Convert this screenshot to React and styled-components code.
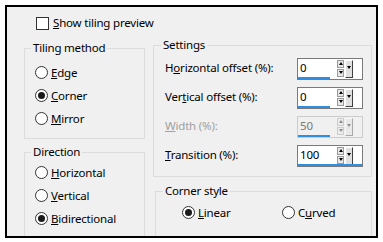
import styled, { createGlobalStyle } from 'styled-components';

const GlobalStyle = createGlobalStyle`
	html, body {
		margin: 0;
		padding: 0;
		background: #ffffff;
	}
	body {
		font-family: "Noto Sans", "Segoe UI", sans-serif;
		font-size: 11.5px;
		letter-spacing: -0.2px;
		color: #000000;
	}
`;

const SETTINGS = [
	{ label: ['H', 'o', 'rizontal offset (%):'], value: '0', fill: 0.5 },
	{ label: ['Ver', 't', 'ical offset (%):'], value: '0', fill: 0.5 },
	{ label: ['', 'W', 'idth (%):'], value: '50', fill: 0.5, disabled: true },
	{ label: ['', 'T', 'ransition (%):'], value: '100', fill: 1 },
];

function Mnemonic({ parts }) {
	return (
		<>
			{parts[0]}
			<u>{parts[1]}</u>
			{parts[2]}
		</>
	);
}

function Radio({ checked, parts }) {
	return (
		<RadioRow>
			<Circle $checked={checked} />
			<span>
				<Mnemonic parts={parts} />
			</span>
		</RadioRow>
	);
}

function SpinBox({ value, fill, disabled }) {
	return (
		<Spin $disabled={disabled}>
			<SpinTop>
				<Value $disabled={disabled}>{value}</Value>
				<Arrows $disabled={disabled}>
					<ArrowBtn>
						<Tri $up />
					</ArrowBtn>
					<ArrowBtn>
						<Tri />
					</ArrowBtn>
				</Arrows>
				<DropBtn $disabled={disabled}>
					<Tri />
				</DropBtn>
			</SpinTop>
			<Bar style={{ width: `${fill * 100}%` }} />
		</Spin>
	);
}

function App() {
	return (
		<>
			<GlobalStyle />
			<Frame>
				<CheckRow>
					<CheckBox />
					<span>
						<u>S</u>how tiling preview
					</span>
				</CheckRow>
				<Columns>
					<LeftCol>
						<Group>
							<Legend>Tiling method</Legend>
							<RadioList $top={6} $bottom={8}>
								<Radio parts={['', 'E', 'dge']} />
								<Radio parts={['', 'C', 'orner']} checked />
								<Radio parts={['', 'M', 'irror']} />
							</RadioList>
						</Group>
						<Group $gap={6}>
							<Legend>Direction</Legend>
							<RadioList $top={2} $bottom={20}>
								<Radio parts={['', 'H', 'orizontal']} />
								<Radio parts={['', 'V', 'ertical']} />
								<Radio parts={['', 'B', 'idirectional']} checked />
							</RadioList>
						</Group>
					</LeftCol>
					<RightCol>
						<Group>
							<Legend $left={7}>Settings</Legend>
							<SettingsList>
								{SETTINGS.map((s) => (
									<SettingRow key={s.value + s.label[2]}>
										<Label $disabled={s.disabled}>
											<Mnemonic parts={s.label} />
										</Label>
										<SpinBox value={s.value} fill={s.fill} disabled={s.disabled} />
									</SettingRow>
								))}
							</SettingsList>
						</Group>
						<Group $gap={7} $indent={2}>
							<Legend $left={7}>Corner style</Legend>
							<CornerOptions>
								<Radio parts={['', 'L', 'inear']} checked />
								<Radio parts={['C', 'u', 'rved']} />
							</CornerOptions>
						</Group>
					</RightCol>
				</Columns>
			</Frame>
		</>
	);
}

const Frame = styled.div`
	box-sizing: border-box;
	margin: 5px;
	width: 373px;
	height: 233px;
	border: 2px solid #000000;
	background: #f0f0f0;
	overflow: hidden;
	padding: 8px 0 0 17px;
`;

const CheckRow = styled.div`
	display: flex;
	align-items: center;
	gap: 4px;
	height: 16px;
	margin-left: 12px;
	line-height: 16px;
`;

const CheckBox = styled.div`
	box-sizing: border-box;
	width: 13px;
	height: 13px;
	border: 1px solid #333333;
	background: #ffffff;
`;

const Columns = styled.div`
	display: flex;
	align-items: flex-start;
	gap: 8px;
	margin-top: 7px;
`;

const LeftCol = styled.div`
	display: flex;
	flex-direction: column;
	width: 121px;
	padding-top: 3px;
`;

const RightCol = styled.div`
	display: flex;
	flex-direction: column;
	width: 219px;
`;

const Group = styled.fieldset`
	box-sizing: border-box;
	margin: ${(p) => p.$gap || 0}px 0 0 ${(p) => p.$indent || 0}px;
	padding: 0;
	min-width: 0;
	border: 1px solid #dcdcdc;
`;

const Legend = styled.legend`
	margin-left: ${(p) => (p.$left === undefined ? 6 : p.$left)}px;
	padding: 0 2px;
	line-height: 14px;
`;

const RadioList = styled.div`
	display: flex;
	flex-direction: column;
	padding: ${(p) => p.$top}px 0 ${(p) => p.$bottom}px 10px;
`;

const RadioRow = styled.div`
	display: flex;
	align-items: center;
	gap: 3px;
	height: 23px;
`;

const Circle = styled.div`
	box-sizing: border-box;
	width: 13px;
	height: 13px;
	border: 1px solid #333333;
	border-radius: 50%;
	background: #ffffff;
	display: flex;
	align-items: center;
	justify-content: center;
	&::after {
		content: '';
		display: ${(p) => (p.$checked ? 'block' : 'none')};
		width: 7px;
		height: 7px;
		border-radius: 50%;
		background: #1a1a1a;
	}
`;

const SettingsList = styled.div`
	display: flex;
	flex-direction: column;
	gap: 7px;
	padding: 6px 8px 9px 11px;
`;

const SettingRow = styled.div`
	display: flex;
	align-items: center;
	justify-content: space-between;
	height: 22px;
`;

const Label = styled.span`
	padding-bottom: 3px;
	color: ${(p) => (p.$disabled ? '#a0a0a0' : '#000000')};
`;

const Spin = styled.div`
	box-sizing: border-box;
	width: 66px;
	height: 22px;
	border: 1px solid ${(p) => (p.$disabled ? '#cccccc' : '#7a7a7a')};
	background: ${(p) => (p.$disabled ? '#f0f0f0' : '#ffffff')};
	display: flex;
	flex-direction: column;
`;

const SpinTop = styled.div`
	display: flex;
	align-items: center;
	height: 18px;
	padding-right: 9px;
`;

const Value = styled.span`
	flex: 1;
	padding-left: 2px;
	line-height: 18px;
	color: ${(p) => (p.$disabled ? '#7a7a7a' : '#000000')};
`;

const Arrows = styled.div`
	display: flex;
	flex-direction: column;
	gap: 1px;
	width: 7px;
	opacity: ${(p) => (p.$disabled ? 0.4 : 1)};
`;

const ArrowBtn = styled.div`
	box-sizing: border-box;
	height: 8px;
	border: 1px solid #9a9a9a;
	background: #e8e8e8;
	display: flex;
	align-items: center;
	justify-content: center;
`;

const Tri = styled.div`
	width: 0;
	height: 0;
	border-left: 2px solid transparent;
	border-right: 2px solid transparent;
	${(p) =>
		p.$up ? 'border-bottom: 3px solid #000000;' : 'border-top: 3px solid #000000;'}
`;

const DropBtn = styled.div`
	box-sizing: border-box;
	width: 8px;
	height: 18px;
	margin-left: 1px;
	margin-top: 1px;
	padding-top: 5px;
	background: #e1e1e1;
	border-top: 1px solid #ffffff;
	border-left: 1px solid #ffffff;
	border-right: 1px solid #404040;
	border-bottom: 1px solid #404040;
	display: flex;
	justify-content: center;
	opacity: ${(p) => (p.$disabled ? 0.4 : 1)};
`;

const Bar = styled.div`
	height: 2px;
	background: #2f8de4;
`;

const CornerOptions = styled.div`
	display: grid;
	grid-template-columns: 100px 100px;
	padding: 3px 0 20px 26px;
`;

export default App;
